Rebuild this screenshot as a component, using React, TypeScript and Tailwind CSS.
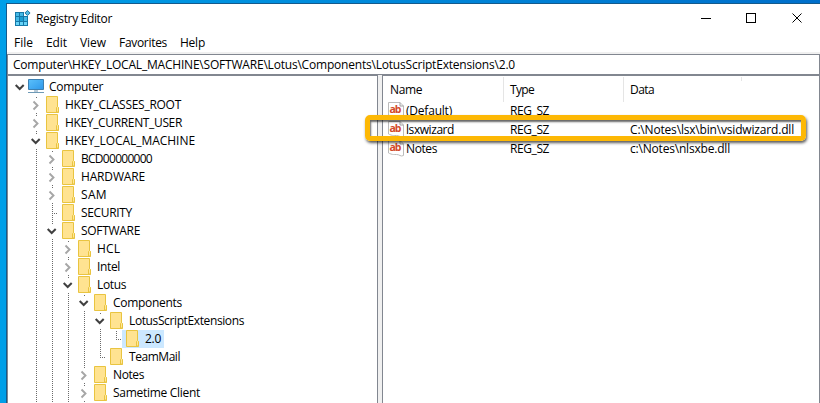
import { useLayoutEffect, useRef, useState } from "react";

/** Text whose tracking is adjusted so that it fills the given width. */
function Fit({ children, w, className = "" }: { children: string; w: number; className?: string }) {
  const ref = useRef<HTMLSpanElement>(null);
  const [spacing, setSpacing] = useState(0);
  useLayoutEffect(() => {
    if (ref.current) {
      const natural = ref.current.getBoundingClientRect().width - spacing * children.length;
      setSpacing((w - natural) / children.length);
    }
  }, [children, w]);
  return (
    <span ref={ref} className={`inline-block whitespace-pre ${className}`} style={{ letterSpacing: `${spacing}px` }}>
      {children}
    </span>
  );
}

type Mark = "open" | "closed" | "tee" | "end";
type Node = { label: string; w: number; depth: number; mark: Mark; lines: number[]; up?: boolean; down?: boolean; selected?: boolean };

const nodes: Node[] = [
  { label: "Computer", w: 54, depth: 0, mark: "open", lines: [] },
  { label: "HKEY_CLASSES_ROOT", w: 116, depth: 1, mark: "closed", lines: [], up: true, down: true },
  { label: "HKEY_CURRENT_USER", w: 117, depth: 1, mark: "closed", lines: [], up: true, down: true },
  { label: "HKEY_LOCAL_MACHINE", w: 130, depth: 1, mark: "open", lines: [], up: true, down: true },
  { label: "BCD00000000", w: 71, depth: 2, mark: "closed", lines: [1], up: true, down: true },
  { label: "HARDWARE", w: 64, depth: 2, mark: "closed", lines: [1], up: true, down: true },
  { label: "SAM", w: 26, depth: 2, mark: "closed", lines: [1], up: true, down: true },
  { label: "SECURITY", w: 51, depth: 2, mark: "tee", lines: [1] },
  { label: "SOFTWARE", w: 59, depth: 2, mark: "open", lines: [1], up: true, down: true },
  { label: "HCL", w: 23, depth: 3, mark: "closed", lines: [1, 2], up: true, down: true },
  { label: "Intel", w: 23, depth: 3, mark: "closed", lines: [1, 2], up: true, down: true },
  { label: "Lotus", w: 29, depth: 3, mark: "open", lines: [1, 2], up: true, down: true },
  { label: "Components", w: 69, depth: 4, mark: "open", lines: [1, 2, 3], up: true, down: true },
  { label: "LotusScriptExtensions", w: 115, depth: 5, mark: "open", lines: [1, 2, 3, 4], up: true, down: true },
  { label: "2.0", w: 16, depth: 6, mark: "end", lines: [1, 2, 3, 4, 5], selected: true },
  { label: "TeamMail", w: 51, depth: 5, mark: "end", lines: [1, 2, 3, 4] },
  { label: "Notes", w: 31, depth: 4, mark: "closed", lines: [1, 2, 3], up: true, down: true },
  { label: "Sametime Client", w: 87, depth: 4, mark: "closed", lines: [1, 2, 3], up: true, down: true },
];

function Guides({ node }: { node: Node }) {
  const x = 12.5 + 16 * node.depth;
  const width = node.depth ? 18 + 16 * node.depth : 20;
  return (
    <svg width={width} height="18" viewBox={`0 0 ${width} 18`} className="shrink-0" fill="none">
      <g stroke="#6a6a6a" strokeDasharray="1 1" shapeRendering="crispEdges">
        {node.lines.map((d) => (
          <path key={d} d={`M${12.5 + 16 * d} 1V18`} />
        ))}
        {node.mark === "tee" && <path d={`M${x} 1V18`} />}
        {node.mark === "end" && <path d={`M${x} 1V10`} />}
        {(node.mark === "tee" || node.mark === "end") && <path d={`M${x + 1.5} 9.5h5`} />}
        {node.up && <path d={`M${x} 1v1`} />}
        {node.down && <path d={`M${x} 17v1`} />}
      </g>
      {node.mark === "open" && <path d={`M${x - 4.8} 7l4 4 4-4`} stroke="#404040" strokeWidth="2" />}
      {node.mark === "closed" && <path d={`M${x - 3} 5.5l4 4-4 4`} stroke="#a6a6a6" strokeWidth="1.9" />}
    </svg>
  );
}

function Folder() {
  return (
    <svg width="14" height="17" viewBox="0 0 14 17" className="shrink-0">
      <path d="M.5.5h11v10.3l1 .8v4.900H.5z" fill="#ffe391" stroke="#e9c440" />
      <path d="M10.5 16v-4.5l1-1 1 1V16z" fill="#ffe798" stroke="#e9c440" />
    </svg>
  );
}

function Monitor() {
  return (
    <svg width="16" height="16" viewBox="0 0 16 16" className="shrink-0">
      <defs>
        <linearGradient id="screen" x1="0" y1="0" x2="1" y2="1">
          <stop stopColor="#5bc0fb" />
          <stop offset="1" stopColor="#2d97ea" />
        </linearGradient>
      </defs>
      <path d="M.5 1.5h15v10H.5z" fill="url(#screen)" stroke="#3c7fb1" />
      <path d="M6 12h4v2H6z" fill="#b9cbd8" />
      <path d="M0 14.5h16" stroke="#6f9ab6" />
    </svg>
  );
}

function StringIcon() {
  return (
    <svg width="16" height="17" viewBox="0 0 16 17" className="shrink-0">
      <path d="M.5.5H12L15.5 4v11.5q-2 1-3.500 0t-3.500-1-3 0-2.500-.5-2.500-1z" fill="#fff" stroke="#bcbcbc" />
      <path d="M12 .5V4h3.5" fill="none" stroke="#a0a0a0" />
      <text x="1.5" y="10.500" textLength="12" fontSize="10.5" fontWeight="700" fontFamily="Open Sans, sans-serif" fill="#d2492a">ab</text>
    </svg>
  );
}

function RegistryIcon() {
  return (
    <svg width="16" height="16" viewBox="0 0 16 16" className="shrink-0">
      <path d="M0 2h9v4h4v10H0z" fill="#1578a8" />
      <path d="M1 3h3v3H1zM5 3h3v3H5zM1 7h3v4H1zM9 7h3v4H9z" fill="#45b9e6" />
      <path d="M5 7h3v4H5z" fill="#189ed3" />
      <path d="M1 12h3v3H1zM5 12h3v3H5zM9 12h3v3H9z" fill="#66d3f7" />
      <path d="M12.500.4l2.600 2.600-2.600 2.600L9.900 3z" fill="#4fb9e3" stroke="#2779a0" />
    </svg>
  );
}

const menus = [
  { label: "File", w: 19, gap: "mr-[13px]" },
  { label: "Edit", w: 21, gap: "mr-[13px]" },
  { label: "View", w: 26, gap: "mr-[13px]" },
  { label: "Favorites", w: 48, gap: "mr-[13px]" },
  { label: "Help", w: 25, gap: "" },
];

const values = [
  { name: "(Default)", nw: 46, data: "", dw: 0 },
  { name: "lsxwizard", nw: 48, data: "C:\\Notes\\lsx\\bin\\vsidwizard.dll", dw: 164 },
  { name: "Notes", nw: 31, data: "c:\\Notes\\nlsxbe.dll", dw: 100 },
];

export default function App() {
  return (
    <div className="relative flex h-[403px] w-[820px] overflow-hidden bg-linear-to-r from-[#009fe8] to-[#006fcb] pt-[3px] pl-[6px] font-['Open_Sans',sans-serif] text-[12px] leading-[18px] text-black">
      <div className="flex grow flex-col border-t border-l border-[#155a8c] bg-white">
        <header className="flex h-[30px] shrink-0 items-start pt-[6px] pl-2">
          <RegistryIcon />
          <Fit w={76} className="ml-[5px]">Registry Editor</Fit>
          <svg width="102" height="11" viewBox="0 0 102 11" className="mt-[3px] mr-[17px] ml-auto" fill="none" stroke="#000">
            <path d="M0 5.5h10M45.5.5h9v9h-9z" shapeRendering="crispEdges" />
            <path d="M91.5.5l9 9M100.500.5l-9 9" />
          </svg>
        </header>
        <nav className="flex h-[18px] shrink-0 items-center pl-[7px]">
          {menus.map((m) => (
            <Fit key={m.label} w={m.w} className={m.gap}>{m.label}</Fit>
          ))}
        </nav>
        <div className="h-[2px] shrink-0 bg-[#f0f0f0]" />
        <div className="flex h-[21px] shrink-0 items-center border border-[#828790] pl-[5px]">
          <Fit w={502}>{"Computer\\HKEY_LOCAL_MACHINE\\SOFTWARE\\Lotus\\Components\\LotusScriptExtensions\\2.0"}</Fit>
        </div>
        <div className="flex grow bg-[#f0f0f0]">
          <section className="flex w-[371px] shrink-0 flex-col border-t border-r border-l border-[#828790] bg-white pt-[2px]">
            {nodes.map((n) => (
              <div key={n.label} className="flex h-[18px] shrink-0">
                <Guides node={n} />
                <div className={n.selected ? "flex w-[42px] bg-[#cce8ff] pl-1" : n.depth ? "flex pl-1" : "flex"}>
                  {n.depth ? <Folder /> : <Monitor />}
                  <Fit w={n.w} className="ml-[5px]">{n.label}</Fit>
                </div>
              </div>
            ))}
          </section>
          <section className="ml-1 flex grow flex-col border-t border-r border-l border-[#828790] bg-white">
            <div className="grid h-[26px] shrink-0 grid-cols-[121px_120px_117px_1fr] pt-px leading-[25px]">
              <div className="border-r border-[#e5e5e5] pl-[7px]"><Fit w={32}>Name</Fit></div>
              <div className="border-r border-[#e5e5e5] pl-[6px]"><Fit w={24}>Type</Fit></div>
              <div className="pl-[6px]"><Fit w={24}>Data</Fit></div>
              <div className="h-1 border-l border-[#e5e5e5]" />
            </div>
            {values.map((v) => (
              <div key={v.name} className="grid h-[19px] shrink-0 grid-cols-[121px_120px_1fr]">
                <div className="flex items-start pl-[5px]">
                  <StringIcon />
                  <Fit w={v.nw} className="ml-[2px]">{v.name}</Fit>
                </div>
                <div className="pl-[6px]"><Fit w={39}>REG_SZ</Fit></div>
                <div className="pl-[6px]">{v.data && <Fit w={v.dw}>{v.data}</Fit>}</div>
              </div>
            ))}
          </section>
        </div>
      </div>
      <div className="absolute top-[115px] left-[365px] h-[26px] w-[441px] rounded-[5px] border-[5px] border-[#fdb805] shadow-[1px_2px_3px_rgba(0,0,0,.65),inset_1px_2px_2px_rgba(0,0,0,.6)]" />
    </div>
  );
}
